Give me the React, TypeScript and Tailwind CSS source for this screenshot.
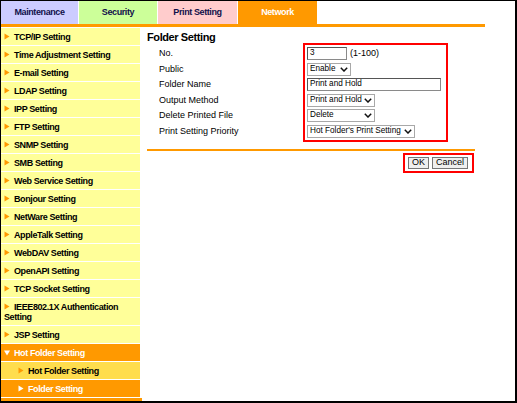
import React from 'react';

type NavKind = 'normal' | 'open' | 'sub' | 'active';

const navItems: { label: string; kind: NavKind }[] = [
  { label: 'TCP/IP Setting', kind: 'normal' },
  { label: 'Time Adjustment Setting', kind: 'normal' },
  { label: 'E-mail Setting', kind: 'normal' },
  { label: 'LDAP Setting', kind: 'normal' },
  { label: 'IPP Setting', kind: 'normal' },
  { label: 'FTP Setting', kind: 'normal' },
  { label: 'SNMP Setting', kind: 'normal' },
  { label: 'SMB Setting', kind: 'normal' },
  { label: 'Web Service Setting', kind: 'normal' },
  { label: 'Bonjour Setting', kind: 'normal' },
  { label: 'NetWare Setting', kind: 'normal' },
  { label: 'AppleTalk Setting', kind: 'normal' },
  { label: 'WebDAV Setting', kind: 'normal' },
  { label: 'OpenAPI Setting', kind: 'normal' },
  { label: 'TCP Socket Setting', kind: 'normal' },
  { label: 'IEEE802.1X Authentication Setting', kind: 'normal' },
  { label: 'JSP Setting', kind: 'normal' },
  { label: 'Hot Folder Setting', kind: 'open' },
  { label: 'Hot Folder Setting', kind: 'sub' },
  { label: 'Folder Setting', kind: 'active' },
];

const tabs = [
  { label: 'Maintenance', cls: 'w-[77px] bg-[#ccccff] text-[#10104a]' },
  { label: 'Security', cls: 'w-[78px] bg-[#ccff99] text-[#10104a]' },
  { label: 'Print Setting', cls: 'w-[79px] bg-[#ffcccc] text-[#10104a]' },
  { label: 'Network', cls: 'w-[79px] bg-[#ff9900] text-white' },
];

const Arrow = ({ color, down }: { color: string; down?: boolean }) => (
  <svg width="6" height="7" viewBox="0 0 6 7" className="inline-block align-[-0.5px] mr-[4px]">
    {down ? <polygon points="0,1.5 6,1.5 3,6.5" fill={color} /> : <polygon points="0.5,0.5 5.5,3.5 0.5,6.5" fill={color} />}
  </svg>
);

const NavItem = ({ label, kind }: { label: string; kind: NavKind }) => {
  const bg =
    kind === 'open' || kind === 'active' ? 'bg-[#ff9900] text-white' : kind === 'sub' ? 'bg-[#ffdd4d] text-black' : 'bg-[#ffff99] text-black';
  const indent = kind === 'sub' || kind === 'active' ? 'pl-[17px]' : 'pl-[3px]';
  const arrowColor = kind === 'normal' || kind === 'sub' ? '#ff9900' : '#ffffff';
  return (
    <div className={`${bg} ${indent} pr-1 py-[3.5px] leading-[10px] text-[9px] tracking-[-0.4px] font-bold`}>
      <Arrow color={arrowColor} down={kind === 'open'} />
      {label}
    </div>
  );
};

const Chevron = () => (
  <svg width="8" height="5" viewBox="0 0 8 5" className="shrink-0 ml-px">
    <polyline points="0.8,0.8 4,4 7.2,0.8" fill="none" stroke="#111" strokeWidth="1.5" />
  </svg>
);

const SelectBox = ({ value, width }: { value: string; width: string }) => (
  <div className={`${width} h-[13px] flex items-center justify-between border border-[#a8a8a8] bg-white pl-[2px] pr-[2px] text-[8.2px] leading-none`}>
    <span className="whitespace-nowrap">{value}</span>
    <Chevron />
  </div>
);

const TextBox = ({ value, width }: { value: string; width: string }) => (
  <div className={`${width} h-[13px] flex items-center border border-[#8a8a8a] border-t-[#555] border-l-[#555] bg-white pl-[2px] text-[8.2px] leading-none`}>
    {value}
  </div>
);

const labels = ['No.', 'Public', 'Folder Name', 'Output Method', 'Delete Printed File', 'Print Setting Priority'];

export default function App() {
  return (
    <div className="w-[517px] h-[403px] overflow-hidden bg-white border-l border-t border-r-2 border-b-2 border-black font-['Liberation_Sans',Arial,sans-serif] text-black">
      <div className="flex h-[23px] gap-px">
        {tabs.map((t) => (
          <div key={t.label} className={`${t.cls} flex items-center justify-center text-[9px] tracking-[-0.4px] font-bold`}>
            {t.label}
          </div>
        ))}
      </div>
      <div className="w-[484px] h-[3px] bg-[#ff9900]" />
      <div className="flex mt-px">
        <div className="w-[139px] flex flex-col gap-px shrink-0">
          {navItems.map((it, i) => (
            <NavItem key={i} label={it.label} kind={it.kind} />
          ))}
          <div className="h-[4px] bg-[#ff9900] w-[141px]" />
        </div>
        <div className="pl-[7px]">
          <h2 className="mt-[3px] h-[12px] leading-[12px] text-[11px] tracking-[-0.4px] font-bold">Folder Setting</h2>
          <div className="flex">
            <div className="ml-[12px] w-[144px] pt-[4px] flex flex-col gap-[2.5px] text-[9px]">
              {labels.map((l) => (
                <div key={l} className="h-[13px] flex items-center leading-none">
                  {l}
                </div>
              ))}
            </div>
            <div className="w-[145px] border-2 border-[#ff0000] p-[2px] flex flex-col gap-[2.5px]">
              <div className="flex items-center gap-[3px]">
                <TextBox value="3" width="w-[40px]" />
                <span className="text-[9px] leading-none">(1-100)</span>
              </div>
              <SelectBox value="Enable" width="w-[44px]" />
              <TextBox value="Print and Hold" width="w-[134px]" />
              <SelectBox value="Print and Hold" width="w-[68px]" />
              <SelectBox value="Delete" width="w-[68px]" />
              <SelectBox value="Hot Folder's Print Setting" width="w-[108px]" />
            </div>
          </div>
          <div className="mt-[7px] w-[328px] h-[2px] bg-[#ff9900]" />
          <div className="w-[328px] flex justify-end">
            <div className="mt-[2px] mr-px border-2 border-[#ff0000] pl-[3px] pr-[4px] py-[2px] flex gap-[3px]">
              <button className="w-[21px] h-[12px] flex items-center justify-center border border-[#767676] bg-[#efefef] text-[9px] leading-none">
                OK
              </button>
              <button className="w-[36px] h-[12px] flex items-center justify-center border border-[#767676] bg-[#efefef] text-[9px] leading-none">
                Cancel
              </button>
            </div>
          </div>
        </div>
      </div>
    </div>
  );
}
